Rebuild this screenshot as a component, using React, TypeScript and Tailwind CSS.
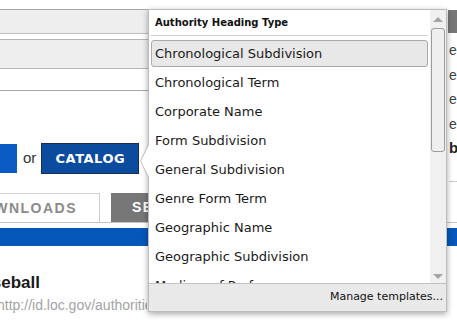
import React from "react";

const items = [
  "Chronological Subdivision",
  "Chronological Term",
  "Corporate Name",
  "Form Subdivision",
  "General Subdivision",
  "Genre Form Term",
  "Geographic Name",
  "Geographic Subdivision",
  "Medium of Performance",
  "Named Event",
];

export default function App() {
  return (
    <div className="relative w-[457px] h-[320px] overflow-hidden bg-white font-['Liberation_Sans',Arial,sans-serif] text-[#333]">
      {/* PAGE BEHIND */}
      <div className="flex flex-col">
        <div className="h-[9px]" />
        <div className="flex h-[25px]">
          <div className="flex-1 border-t border-t-[#a8a8a8] border-b border-b-[#bdbdbd] bg-[#eeeeee]" />
          <div className="w-[9px] ml-[2px] my-[1px] bg-[#777]" />
        </div>

        <div className="flex">
          <div className="w-[446px] flex flex-col">
            <div className="h-[5px]" />
            <div className="h-[30px] border-y border-[#b5b5b5] bg-[#eeeeee]" />
            <div className="h-[22px] border-b border-[#a8a8a8]" />
            <div className="h-[52px]" />

            {/* BUTTONS */}
            <div className="flex items-center h-[31px]">
              <div className="w-[17px] h-[29px] bg-[#0a5bc4]" />
              <span className="ml-[6px] text-[15px] text-[#333]">or</span>
              <div className="ml-[5px] w-[98px] h-[31px] bg-[#0b4c9f] border border-[#1d2c48] flex items-center justify-center text-white font-bold text-[13px] tracking-[0.5px] font-['DejaVu_Sans',sans-serif]">
                CATALOG
              </div>
            </div>

            <div className="h-[19px]" />

            {/* TABS */}
            <div className="flex h-[29px]">
              <div className="w-[100px] border-t border-r border-[#cfcfcf] bg-white flex items-center justify-end pr-[22px] overflow-hidden whitespace-nowrap">
                <span className="text-[14px] font-bold tracking-[1.5px] text-[#8a8a8a]">DOWNLOADS</span>
              </div>
              <div className="ml-[11px] w-[120px] bg-[#777] flex items-center pl-[21px] whitespace-nowrap">
                <span className="text-[14px] font-bold tracking-[1.5px] text-white">SEARCH</span>
              </div>
            </div>
          </div>

          <div className="flex-1 flex flex-col pl-[3px] pt-[4px] overflow-hidden">
            {["e", "e", "e", "e"].map((l, i) => (
              <div key={i} className="h-[24.5px] leading-[24.5px] text-[14px] text-[#444]">{l}</div>
            ))}
            <div className="h-[24.5px] leading-[24.5px] text-[15px] font-bold text-[#222]">bi</div>
            <div className="h-[21px] border-b border-[#ccc]" />
          </div>
        </div>

        <div className="h-[1px] bg-[#c4c4c4]" />
        <div className="h-[5px]" />
        <div className="h-[18px] bg-[#0557b9]" />

        <div className="mt-[24px] w-[40px] flex justify-end overflow-hidden whitespace-nowrap">
          <span className="text-[17px] font-bold text-[#1a1a1a]">Baseball</span>
        </div>
        <div className="-mt-[1px] -ml-[3px] w-[150px] overflow-hidden whitespace-nowrap text-[14px] text-[#a3a3a3]">
          http://id.loc.gov/authorities/subjects
        </div>
      </div>

      {/* POPUP */}
      <div className="absolute left-[148px] top-[9px] w-[299px] h-[303px] bg-white border border-[#bcbcbc] shadow-[0_2px_6px_rgba(0,0,0,0.35)] flex flex-col font-['DejaVu_Sans',Verdana,sans-serif] text-[#1a1a1a]">
        {/* arrow */}
        <div className="absolute left-[-9px] top-[134px] w-0 h-0 border-y-[17px] border-y-transparent border-r-[8px] border-r-[#c2c2c2]" />
        <div className="absolute left-[-8px] top-[135px] w-0 h-0 border-y-[16px] border-y-transparent border-r-[8px] border-r-white" />

        <div className="flex h-[273px]">
          <div className="flex-1 flex flex-col overflow-hidden">
            <div className="h-[25px] shrink-0 flex items-center pl-[6px] text-[10px] font-bold text-[#111]">
              Authority Heading Type
            </div>
            <div className="mx-[2px] h-px shrink-0 bg-[#cfcfcf]" />
            <div className="flex flex-col gap-[2px] pt-[4px] px-[2px]">
              {items.map((t, i) => (
                <div
                  key={t}
                  className={`h-[27px] shrink-0 flex items-center pl-[3px] text-[13px] whitespace-nowrap rounded-[3px] border ${
                    i === 0 ? "bg-[#e8e8e8] border-[#a9a9a9]" : "border-transparent"
                  }`}
                >
                  {t}
                </div>
              ))}
            </div>
          </div>

          {/* SCROLLBAR */}
          <div className="w-[16px] bg-[#f0f0f0] flex flex-col items-center">
            <div className="h-[17px] shrink-0 flex items-center justify-center pt-[2px]">
              <div className="w-0 h-0 border-x-[5px] border-x-transparent border-b-[5px] border-b-[#a3a3a3]" />
            </div>
            <div className="mt-[1px] w-[14px] h-[124px] rounded-[3px] border border-[#9c9c9c] bg-[#efefef]" />
            <div className="flex-1" />
            <div className="h-[14px] shrink-0 flex items-center justify-center">
              <div className="w-0 h-0 border-x-[5px] border-x-transparent border-t-[5px] border-t-[#a3a3a3]" />
            </div>
          </div>
        </div>

        {/* FOOTER */}
        <div className="flex-1 border-t border-[#c2c2c2] bg-[#e9e9e9] flex items-center justify-end pr-[3px] text-[11px] text-[#111]">
          Manage templates...
        </div>
      </div>
    </div>
  );
}
